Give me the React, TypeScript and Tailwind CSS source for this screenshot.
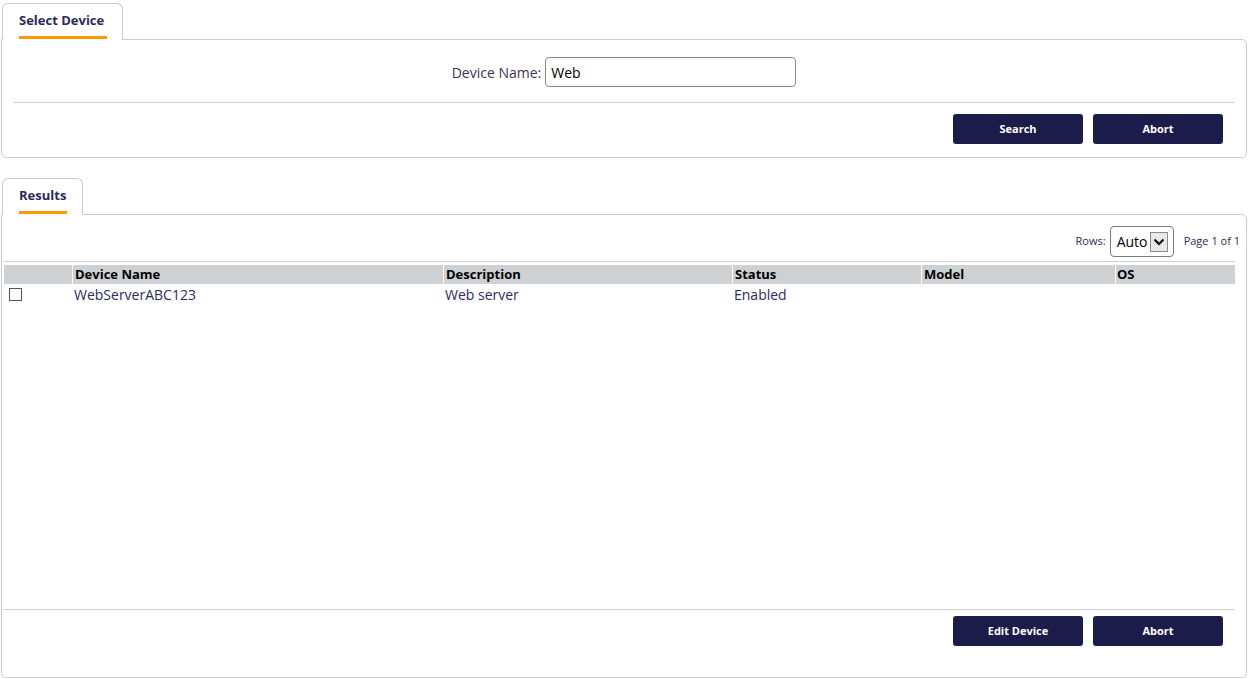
import React from "react";

const font = { fontFamily: '"Open Sans", "Noto Sans", sans-serif' };

function Tab({ label, width, ul }: { label: string; width: string; ul: string }) {
  return (
    <div className={`relative z-10 ml-[1px] -mb-px h-[37px] ${width} rounded-t-[6px] border border-b-0 border-[#c8cccd] bg-white px-[16px] pt-[7px] flex flex-col`}>
      <div className="text-[13px] font-bold leading-[18px] text-[#2b2a5a] whitespace-nowrap">{label}</div>
      <div className={`mt-auto mb-[1px] h-[3px] ${ul} bg-[#ff9900]`} />
    </div>
  );
}

function Btn({ label }: { label: string }) {
  return (
    <button className="h-[30px] w-[130px] rounded-[3px] bg-[#1c1c4b] text-[11px] font-bold text-white">
      {label}
    </button>
  );
}

export default function App() {
  return (
    <div className="min-h-screen bg-white pl-[1px] pr-[2px] pt-[3px]" style={font}>
      <Tab label="Select Device" width="w-[121px]" ul="w-[88px]" />
      <div className="h-[119px] rounded-[5px] rounded-tl-none border border-[#c8cccd] flex flex-col">
        <div className="mt-[17px] flex h-[30px] items-center justify-center gap-[4px]">
          <span className="text-[14px] text-[#40305a]">Device Name:</span>
          <div className="flex h-[30px] w-[251px] items-center rounded-[4px] border border-[#8a8a8a] px-[5px] text-[14px] text-black">
            Web
          </div>
        </div>
        <div className="mx-[12px] mt-[15px] h-px bg-[#ccd0d1]" />
        <div className="mt-[11px] flex justify-end gap-[10px] pr-[23px]">
          <Btn label="Search" />
          <Btn label="Abort" />
        </div>
      </div>

      <div className="mt-[20px]">
        <Tab label="Results" width="w-[81px]" ul="w-[48px]" />
        <div className="h-[464px] rounded-[5px] rounded-tl-none border border-[#c8cccd] flex flex-col">
          <div className="mt-[11px] flex h-[31px] items-center justify-end pr-[6px]">
            <span className="text-[11px] text-[#2b2a5a]">Rows:</span>
            <div className="ml-[4px] flex h-[31px] w-[64px] items-center rounded-[4px] border border-[#7a7a7a] pl-[6px]">
              <span className="text-[14px] text-black">Auto</span>
              <div className="ml-[2px] flex h-[20px] w-[18px] items-center justify-center border border-[#8a8a8a] bg-[#e8e8e8]">
                <svg width="12" height="8" viewBox="0 0 12 8">
                  <path d="M1.5 1.5 L6 6 L10.5 1.5" fill="none" stroke="#000" strokeWidth="2" />
                </svg>
              </div>
            </div>
            <span className="ml-[10px] text-[11px] text-[#2b2a5a]">Page 1 of 1</span>
          </div>
          <div className="ml-[2px] mr-[11px] mt-[4px] h-px bg-[#ccd0d1]" />
          <div className="ml-[2px] mr-[11px] mt-[3px]">
            <div className="grid h-[19px] grid-cols-[68px_370px_288px_188px_193px_1fr] gap-x-px text-[13px] font-bold leading-[19px] text-black">
              <div className="bg-[#cdd1d3]" />
              <div className="bg-[#cdd1d3] pl-[2px]">Device Name</div>
              <div className="bg-[#cdd1d3] pl-[2px]">Description</div>
              <div className="bg-[#cdd1d3] pl-[2px]">Status</div>
              <div className="bg-[#cdd1d3] pl-[2px]">Model</div>
              <div className="bg-[#cdd1d3] pl-[1px]">OS</div>
            </div>
            <div className="mt-[1px] grid h-[19px] grid-cols-[68px_370px_288px_188px_193px_1fr] gap-x-px text-[14px] leading-[19px] text-[#2b2a66]">
              <div className="flex items-center pl-[5px]">
                <div className="h-[13px] w-[13px] border border-[#555] bg-white" />
              </div>
              <div className="pl-[1px]">WebServerABC123</div>
              <div className="pl-[1px]">Web server</div>
              <div className="pl-[1px]">Enabled</div>
              <div />
              <div />
            </div>
          </div>
          <div className="mt-auto ml-[2px] mr-[11px] h-px bg-[#ccd0d1]" />
          <div className="mt-[6px] mb-[31px] flex justify-end gap-[10px] pr-[23px]">
            <Btn label="Edit Device" />
            <Btn label="Abort" />
          </div>
        </div>
      </div>
    </div>
  );
}
